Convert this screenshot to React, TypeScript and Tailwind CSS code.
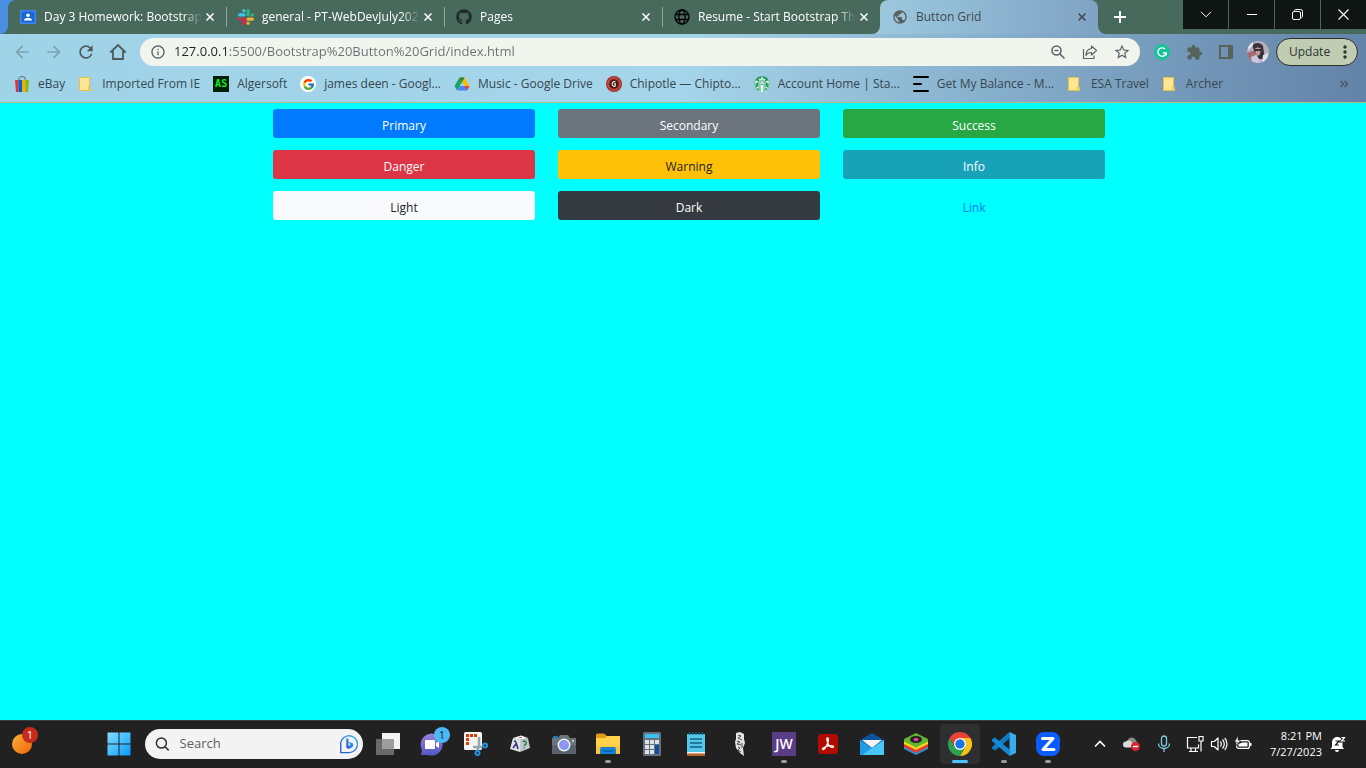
import type { ReactNode } from "react";
import clsx from "clsx";
import { FaGithub } from "react-icons/fa";
import { FcGoogle } from "react-icons/fc";
import { SiStarbucks } from "react-icons/si";
import {
  MdArrowBack,
  MdArrowForward,
  MdExtension,
  MdInfoOutline,
  MdMoreVert,
  MdPublic,
  MdRefresh,
  MdStarBorder,
} from "react-icons/md";

/* ---------- favicons ---------- */

function ClassroomIcon() {
  return (
    <svg width="16" height="16" viewBox="0 0 16 16">
      <rect y="1" width="16" height="14" rx="1.500" fill="#4285f4" />
      <rect x="1.500" y="2.500" width="13" height="11" fill="#1967d2" />
      <circle cx="8" cy="6.300" r="1.800" fill="#fff" />
      <path d="M4 11.500c0-2 2-2.800 4-2.800s4 .8 4 2.800z" fill="#fff" />
    </svg>
  );
}

function SlackIcon() {
  return (
    <svg width="16" height="16" viewBox="0 0 24 24">
      <path d="M5 15.200a2.500 2.500 0 1 1-2.500-2.500H5zm1.300 0a2.500 2.500 0 0 1 5 0v6.300a2.500 2.500 0 0 1-5 0z" fill="#e01e5a" />
      <path d="M8.800 5a2.500 2.500 0 1 1 2.500-2.500V5zm0 1.300a2.500 2.500 0 0 1 0 5H2.500a2.500 2.500 0 0 1 0-5z" fill="#36c5f0" />
      <path d="M19 8.800a2.500 2.500 0 1 1 2.500 2.500H19zm-1.300 0a2.500 2.500 0 0 1-5 0V2.500a2.500 2.500 0 0 1 5 0z" fill="#2eb67d" />
      <path d="M15.200 19a2.500 2.500 0 1 1-2.500 2.500V19zm0-1.300a2.500 2.500 0 0 1 0-5h6.300a2.500 2.500 0 0 1 0 5z" fill="#ecb22e" />
    </svg>
  );
}

function WireGlobeIcon() {
  return (
    <svg width="16" height="16" viewBox="0 0 16 16" fill="none" stroke="#000" strokeWidth="1.300">
      <circle cx="8" cy="8" r="7" />
      <ellipse cx="8" cy="8" rx="3.200" ry="7" />
      <path d="M2 5.500h12M2 10.500h12" />
    </svg>
  );
}

function EbayIcon() {
  return (
    <svg width="16" height="16" viewBox="0 0 16 16">
      <path d="M4.800 5V3.500a3.200 3 0 0 1 6.400 0V5" fill="none" stroke="#777" strokeWidth="1.200" />
      <path d="M1 4h3.500v12H2z" fill="#e53238" />
      <path d="M4.500 4H8v12H4.500z" fill="#0064d2" />
      <path d="M8 4h3.500v12H8z" fill="#f5af02" />
      <path d="M11.500 4H15l-1 12h-2.500z" fill="#86b817" />
    </svg>
  );
}

function FolderIcon() {
  return (
    <svg width="16" height="16" viewBox="0 0 16 16">
      <path d="M1.500 1.500h10v9.500h1v3.500h-11z" fill="#ffe694" stroke="#e8bf45" />
      <path d="M10.500 14v-3h1.500" fill="none" stroke="#e8bf45" />
    </svg>
  );
}

function AlgersoftIcon() {
  return (
    <span className="grid size-4 place-items-center bg-[#041f08] font-['DejaVu_Sans_Mono',monospace] text-[10px] leading-4 font-bold text-[#13ea24]">
      AS
    </span>
  );
}

function GoogleIcon() {
  return (
    <span className="grid size-4 place-items-center rounded-full bg-white">
      <FcGoogle size={13} />
    </span>
  );
}

function DriveIcon() {
  return (
    <svg width="16" height="16" viewBox="0 0 16 16">
      <path d="M5.500 1.500 8 6 3 14.500.5 10z" fill="#1ea362" />
      <path d="M5.500 1.500h5L15.500 10h-5z" fill="#ffba00" />
      <path d="M5.500 10h10L13 14.500H3z" fill="#4688f4" />
      <path d="M10.500 10h5L13 14.500z" fill="#ea4335" />
      <path d="M5.500 1.500h5L8 6z" fill="#188038" />
    </svg>
  );
}

function ChipotleIcon() {
  return (
    <svg width="16" height="16" viewBox="0 0 16 16">
      <circle cx="8" cy="8" r="8" fill="#a9312a" />
      <circle cx="8" cy="8" r="6" fill="none" stroke="#d98d84" strokeDasharray="1 1" />
      <circle cx="8" cy="8" r="4.500" fill="#451a12" />
      <path d="M9.500 5.800c-2-.6-3.500.5-3.300 2.500s2 2.500 3.300 1.500M8 7.500l1.500.5-.5 2" fill="none" stroke="#f2e4dc" strokeWidth="1.200" />
    </svg>
  );
}

function StarbucksIcon() {
  return (
    <span className="grid size-4 place-items-center rounded-full bg-white">
      <SiStarbucks size={16} color="#1d9b62" />
    </span>
  );
}

function BalanceIcon() {
  return (
    <svg width="16" height="16" viewBox="0 0 16 16">
      <path d="M1 1h14M1 8h7M1 15h14" stroke="#000" strokeWidth="2" strokeLinecap="round" />
    </svg>
  );
}

/* ---------- toolbar icons ---------- */

function CrossIcon() {
  return (
    <svg width="8" height="8" viewBox="0 0 8 8">
      <path d="M.5.5l7 7M7.500.5l-7 7" stroke="currentColor" strokeWidth="1.500" />
    </svg>
  );
}

function HomeIcon() {
  return (
    <svg width="18" height="18" viewBox="0 0 18 18" fill="none" stroke="currentColor" strokeWidth="1.800">
      <path d="M1.300 9.500 9 2l7.700 7.500M4 8v8h10V8" />
    </svg>
  );
}

function ZoomOutIcon() {
  return (
    <svg width="16" height="16" viewBox="0 0 16 16" fill="none" stroke="currentColor" strokeWidth="1.600">
      <circle cx="6.500" cy="6.500" r="4.500" />
      <path d="M10 10l4.500 4.500M4.500 6.500h4" />
    </svg>
  );
}

function ShareIcon() {
  return (
    <svg width="16" height="16" viewBox="0 0 16 16" fill="none" stroke="currentColor" strokeWidth="1.200">
      <path d="M1.500 5v9.500h10.500V11.500" />
      <path d="M9.500 2l5 4.500-5 4.500V8.500C7 8.500 5 9.500 4 11.500c0-4 2-6.500 5.500-7z" strokeLinejoin="round" />
    </svg>
  );
}

function PanelIcon() {
  return (
    <svg width="14" height="14" viewBox="0 0 14 14">
      <path d="M1 1h12v12H1z" fill="none" stroke="#56635a" strokeWidth="2" />
      <path d="M9 1h4v12H9z" fill="#56635a" />
    </svg>
  );
}

function GrammarlyIcon() {
  return (
    <svg width="16" height="16" viewBox="0 0 16 16">
      <circle cx="8" cy="8" r="8" fill="#15c39a" />
      <path d="M11 5a4.200 4.200 0 1 0 1.200 4H9M12.200 9v2.500" fill="none" stroke="#fff" strokeWidth="1.400" />
    </svg>
  );
}

function AvatarIcon() {
  return (
    <svg width="22" height="22" viewBox="0 0 22 22" className="rounded-full">
      <rect width="22" height="22" fill="#b9aebb" />
      <path d="M0 12l8-3 2 13H0z" fill="#a56a72" />
      <path d="M5 5c2-4 9-4 11 0l1 7 2 6h-7l-4-7z" fill="#38323d" />
      <path d="M8 8c1-2 5-2 6 0l-1 5c-1 2-3 2-4 0z" fill="#c19a93" />
      <path d="M7.500 8h7v2h-7z" fill="#37333d" />
      <path d="M16 14l5-2v7l-6 3z" fill="#dbe0ee" />
      <path d="M1 3l5-2v4l-5 4z" fill="#e2dfe6" />
      <path d="M4 16l5-2 5 8H5z" fill="#c9c8dc" />
    </svg>
  );
}

/* ---------- taskbar icons ---------- */

function StartIcon() {
  return (
    <svg width="24" height="24" viewBox="0 0 24 24">
      <defs>
        <linearGradient id="start" x1="0" y1="0" x2="24" y2="24" gradientUnits="userSpaceOnUse">
          <stop stopColor="#85dcff" />
          <stop offset=".5" stopColor="#45beff" />
          <stop offset="1" stopColor="#0793fb" />
        </linearGradient>
      </defs>
      <path d="M.5.5h11v11H.5zM12.500.5h11v11h-11zM.5 12.500h11v11H.5zM12.500 12.500h11v11h-11z" fill="url(#start)" />
    </svg>
  );
}

function WeatherIcon() {
  return (
    <svg width="28" height="28" viewBox="0 0 28 28">
      <defs>
        <linearGradient id="sun" x1="0" y1="0" x2="1" y2="1">
          <stop stopColor="#f9b233" />
          <stop offset="1" stopColor="#f0640c" />
        </linearGradient>
      </defs>
      <circle cx="14" cy="14" r="10" fill="url(#sun)" />
    </svg>
  );
}

function BingIcon() {
  return (
    <svg width="22" height="22" viewBox="0 0 22 22" fill="none">
      <defs>
        <linearGradient id="bing" x1="0" y1="1" x2="1" y2="0">
          <stop stopColor="#2157c8" />
          <stop offset=".5" stopColor="#2b7fe0" />
          <stop offset="1" stopColor="#36c6ee" />
        </linearGradient>
      </defs>
      <path d="M2 20.500v-7A9.300 9.300 0 1 1 11.500 20.500z" stroke="url(#bing)" strokeWidth="1.500" />
      <path d="M8 4.500l2.500 1v8l2-1.500-1.500-3.500 4.500 2c.8 2 0 3.200-1.200 4L10.500 16.500 8 15z" fill="url(#bing)" />
    </svg>
  );
}

function TaskViewIcon() {
  return (
    <svg width="24" height="24" viewBox="0 0 24 24">
      <path d="M6 1h18v16H6z" fill="#f2f2f2" />
      <path d="M0 7h18v16H0z" fill="#6a6a6a" />
      <path d="M6 7h12v10H6z" fill="#9d9d9d" />
    </svg>
  );
}

function ChatIcon() {
  return (
    <svg width="24" height="24" viewBox="0 0 24 24">
      <defs>
        <linearGradient id="chat" x1="0" y1="0" x2="0" y2="1">
          <stop stopColor="#9b7fd6" />
          <stop offset="1" stopColor="#5357c7" />
        </linearGradient>
      </defs>
      <path d="M1 23l1-5A11 11 0 1 1 8 23z" fill="url(#chat)" />
      <rect x="5" y="8" width="10" height="9" rx="1" fill="#fff" />
      <path d="M16 11l3-2v7l-3-2z" fill="#fff" />
    </svg>
  );
}

function SnipIcon() {
  return (
    <svg width="24" height="24" viewBox="0 0 24 24">
      <rect width="18" height="18" rx="1.500" fill="#f5f5f5" />
      <path d="M2 2h3v3H2zM6 2h3v3H6zM10 2h3v3h-3zM2 6h3v3H2zM2 10h3v3H2z" fill="#d83b01" />
      <path d="M15 5v10l-2 4M9 15h9" fill="none" stroke="#9aa4ad" strokeWidth="2.500" />
      <circle cx="21" cy="13.500" r="3" fill="#2196e0" />
      <circle cx="13.500" cy="21" r="3" fill="#2196e0" />
      <circle cx="21" cy="13.500" r="1" fill="#202020" />
      <circle cx="13.500" cy="21" r="1" fill="#202020" />
    </svg>
  );
}

function DiceIcon() {
  return (
    <svg width="22" height="18" viewBox="0 0 22 18">
      <path d="M4 3l8-2.500L19 3l-8 2z" fill="#fafafa" />
      <path d="M4 3l7 2v12L1 14z" fill="#dfe4ea" />
      <path d="M11 5l8-2 2 10-10 4z" fill="#bfc7d0" />
      <path d="M10 2.500h3" stroke="#c9534f" />
      <path d="M5 6c2 0 2 1 4 8M7 9l-3 4" fill="none" stroke="#2a2b78" strokeWidth="1.500" />
      <path d="M14 7c2-2 4 0 3 2l-2 2M15 12.500v1" fill="none" stroke="#2d7a3d" strokeWidth="1.500" />
    </svg>
  );
}

function CameraIcon() {
  return (
    <svg width="24" height="24" viewBox="0 0 24 24">
      <defs>
        <linearGradient id="lens" x1="0" y1="0" x2="1" y2="1">
          <stop stopColor="#4aa8f0" />
          <stop offset=".5" stopColor="#a98cf0" />
          <stop offset="1" stopColor="#27b4f5" />
        </linearGradient>
      </defs>
      <rect x="1" y="4" width="5" height="3" rx="1" fill="#1683c9" />
      <path d="M0 6h6l2-3h8l2 3h6v16H0z" fill="#6c747c" />
      <path d="M0 13h24v9H0z" fill="#59616a" />
      <circle cx="12" cy="13" r="6.500" fill="#f0f2f5" />
      <circle cx="12" cy="13" r="5" fill="url(#lens)" />
      <circle cx="21" cy="9" r="1" fill="#d8dde2" />
    </svg>
  );
}

function ExplorerIcon() {
  return (
    <svg width="26" height="24" viewBox="0 0 26 24">
      <path d="M1 3a1.500 1.500 0 0 1 1.500-1.500H9L12 4v4H1z" fill="#e09b10" />
      <path d="M1 6h9l2-2h13v18H1z" fill="#ffd24a" />
      <path d="M1 14h24v8H1z" fill="#fcc535" />
      <path d="M5 22v-5a2 2 0 0 1 2-2h12a2 2 0 0 1 2 2v5z" fill="#1583d8" />
      <path d="M8 19h10" stroke="#0b5fa8" strokeWidth="1.500" />
    </svg>
  );
}

function CalculatorIcon() {
  return (
    <svg width="18" height="24" viewBox="0 0 18 24">
      <rect width="18" height="24" rx="1.500" fill="#67717c" />
      <path d="M2 2h14v4H2z" fill="#35c1f1" />
      <path d="M2 8h4v4H2zM7 8h4v4H7zM12 8h4v4h-4zM2 13h4v4H2zM7 13h4v4H7zM2 18h4v4H2zM7 18h4v4H7z" fill="#dde2e8" />
      <path d="M12 13h4v9h-4z" fill="#124f96" />
    </svg>
  );
}

function NotepadIcon() {
  return (
    <svg width="18" height="24" viewBox="0 0 18 24">
      <path d="M0 21h18v3H0z" fill="#b5612a" />
      <path d="M0 20h18v1.500H0z" fill="#f2f2f2" />
      <path d="M0 2h18v18H0z" fill="#55c5e8" />
      <path d="M2.500 0v3M5.500 0v3M9 0v3M12.500 0v3M15.500 0v3" stroke="#176a8f" strokeWidth="1.300" />
      <path d="M3 7h12M3 11h12M3 15h12" stroke="#116088" strokeWidth="1.500" />
    </svg>
  );
}

function FeatherIcon() {
  return (
    <svg width="12" height="24" viewBox="0 0 12 24">
      <path d="M2 1l4-1 4 2v5l1 4-2 5 1 8-4-3-4-5-1-6 1-3z" fill="#e4e4e4" />
      <path d="M4 3l3 1-3 2 4 2M3 9l3 1-3 2 4 1M4 15l2 1-2 2 3 2M8 11v5" fill="none" stroke="#3a3a3a" strokeWidth=".9" />
    </svg>
  );
}

function AcrobatIcon() {
  return (
    <svg width="22" height="22" viewBox="0 0 22 22">
      <rect x="1" y="1" width="20" height="20" rx="3.500" fill="#b30b00" />
      <path
        d="M10.500 5c1.500 0 1 3 0 5.500-1.200 3-3.200 6-4.500 6s-.5-2 3-3 7.500-1.200 7.500.2-3 .8-4.500-1.200S9 5 10.500 5z"
        fill="none"
        stroke="#fff"
        strokeWidth="1.300"
      />
    </svg>
  );
}

function MailIcon() {
  return (
    <svg width="24" height="22" viewBox="0 0 24 22">
      <path d="M0 7l12-7 12 7v5H0z" fill="#0b549c" />
      <path d="M2 7h20l-10 8z" fill="#f5f5f5" />
      <path d="M0 7l12 8 12-8v15H0z" fill="#1e9de7" />
      <path d="M24 7v15H2z" fill="#46c7f4" />
    </svg>
  );
}

function BlueStacksIcon() {
  return (
    <svg width="24" height="22" viewBox="0 0 24 22">
      <path d="M0 14l12-6 12 6v2l-12 6-12-6z" fill="#2592dc" />
      <path d="M0 11l12-6 12 6v3l-12 6-12-6z" fill="#e53a2e" />
      <path d="M0 8.500l12-6 12 6V11l-12 6-12-6z" fill="#fbd21c" />
      <path d="M0 6l12-6 12 6v2.500l-12 6-12-6z" fill="#62b52d" />
      <ellipse cx="12" cy="6.500" rx="6" ry="3.500" fill="#202326" />
      <ellipse cx="12" cy="6.500" rx="2.500" ry="1.700" fill="#e63ea0" />
    </svg>
  );
}

function ChromeIcon() {
  return (
    <svg width="24" height="24" viewBox="0 0 48 48">
      <path d="M24 12h20.800A24 24 0 0 0 3.200 12l10.400 18z" fill="#ea4335" />
      <path d="M34.400 30L24 48A24 24 0 0 0 44.800 12H24z" fill="#fbc116" />
      <path d="M13.600 30L3.200 12A24 24 0 0 0 24 48l10.400-18z" fill="#2da14e" />
      <circle cx="24" cy="24" r="12" fill="#fff" />
      <circle cx="24" cy="24" r="9.500" fill="#1a73e8" />
    </svg>
  );
}

function CodeIcon() {
  return (
    <svg width="24" height="24" viewBox="0 0 24 24">
      <path d="M17.500 0v6.500L3 18.500 0 16.500v-1.500z" fill="#0f7cc4" />
      <path d="M17.500 24v-6.500L3 5.500 0 7.500V9z" fill="#1389d3" />
      <path d="M17.500 0L24 3v18l-6.500 3z" fill="#3aaaf0" />
    </svg>
  );
}

function ZoomAppIcon() {
  return (
    <svg width="24" height="24" viewBox="0 0 24 24">
      <rect width="24" height="24" rx="8" fill="#0b5cff" />
      <path d="M6.500 6.500h10.500L7 17.500h11" fill="none" stroke="#fff" strokeWidth="3" strokeLinejoin="round" strokeLinecap="round" />
    </svg>
  );
}

/* ---------- tray icons ---------- */

function CloudIcon() {
  return (
    <svg width="18" height="16" viewBox="0 0 18 16">
      <path d="M5 3.500a4.500 4.500 0 0 1 8 1l2 3-6 2-6-3z" fill="#8a8a8a" />
      <path d="M3 11.500a3 3 0 0 1 0-6 4 4 0 0 1 6 1l3 5z" fill="#dcdcdc" />
      <circle cx="12.500" cy="10.500" r="4.500" fill="#d9232e" />
      <path d="M10 10.500h5" stroke="#fff" strokeWidth="1.400" />
    </svg>
  );
}

function MicIcon() {
  return (
    <svg width="14" height="18" viewBox="0 0 14 18" fill="none" stroke="#7fcbe6" strokeWidth="1.300">
      <rect x="4.500" y="1" width="5" height="10" rx="2.500" />
      <path d="M1.500 8.500c0 3 2.500 5 5.500 5s5.500-2 5.500-5M7 13.500V17" />
    </svg>
  );
}

function NetworkIcon() {
  return (
    <svg width="18" height="18" viewBox="0 0 18 18" fill="none" stroke="#fff" strokeWidth="1.200">
      <path d="M11 2.500H1.500v10.500h11V9.500M5 13v3M9.500 13v3M3 16.500h9" />
      <path d="M13 1.500h4V6h-4zM15 6v10.500" />
    </svg>
  );
}

function SpeakerIcon() {
  return (
    <svg width="18" height="16" viewBox="0 0 18 16" fill="none" stroke="#fff" strokeWidth="1.200">
      <path d="M1.500 5.500h2.800L8 2v12l-3.700-3.500H1.500z" strokeLinejoin="round" />
      <path d="M10.300 5.500a3.500 3.500 0 0 1 0 5M12.500 3.500a6.500 6.500 0 0 1 0 9M14.700 2a9 9 0 0 1 0 12" />
    </svg>
  );
}

function BatteryIcon() {
  return (
    <svg width="18" height="16" viewBox="0 0 18 16">
      <rect x="2.600" y="4.600" width="12.800" height="7.800" rx="2" fill="none" stroke="#fff" strokeWidth="1.200" />
      <path d="M4.500 8l4-1.500h5v4h-9zM16 7h1.500v3H16z" fill="#fff" />
      <path d="M4 0L.5 6h3L2 10l4.500-5.500H4z" fill="#fff" stroke="#202020" strokeWidth=".5" />
    </svg>
  );
}

function BellIcon() {
  return (
    <svg width="16" height="16" viewBox="0 0 16 16">
      <path d="M2 11V6.500C2 3.500 4 1 7 1c4 0 5.500 2.500 5.500 5.500V11l1.500 2H.5zM5 14h4a2 2 0 0 1-4 0z" fill="#fff" />
      <path d="M5.500 5h3.500L5.500 9H9" fill="none" stroke="#202020" strokeWidth="1.200" />
      <path d="M11 1.500h4l-3.500 3.500H15" fill="none" stroke="#202020" strokeWidth="3" />
      <path d="M11.500 1.500h3l-3 3.500h3.500" fill="none" stroke="#fff" strokeWidth="1.200" />
    </svg>
  );
}

/* ---------- data ---------- */

const tabs: { title: string; icon: ReactNode }[] = [
  { title: "Day 3 Homework: Bootstrap", icon: <ClassroomIcon /> },
  { title: "general - PT-WebDevJuly202", icon: <SlackIcon /> },
  { title: "Pages", icon: <FaGithub size={16} color="#24292f" /> },
  { title: "Resume - Start Bootstrap The", icon: <WireGlobeIcon /> },
];

const bookmarks: { title: string; icon: ReactNode }[] = [
  { title: "eBay", icon: <EbayIcon /> },
  { title: "Imported From IE", icon: <FolderIcon /> },
  { title: "Algersoft", icon: <AlgersoftIcon /> },
  { title: "james deen - Googl...", icon: <GoogleIcon /> },
  { title: "Music - Google Drive", icon: <DriveIcon /> },
  { title: "Chipotle — Chipto...", icon: <ChipotleIcon /> },
  { title: "Account Home | Sta...", icon: <StarbucksIcon /> },
  { title: "Get My Balance - M...", icon: <BalanceIcon /> },
  { title: "ESA Travel", icon: <FolderIcon /> },
  { title: "Archer", icon: <FolderIcon /> },
];

const gridButtons = [
  { label: "Primary", style: "bg-[#007bff] text-white" },
  { label: "Secondary", style: "bg-[#6c757d] text-white" },
  { label: "Success", style: "bg-[#28a745] text-white" },
  { label: "Danger", style: "bg-[#dc3545] text-white" },
  { label: "Warning", style: "bg-[#ffc107] text-[#212529]" },
  { label: "Info", style: "bg-[#17a2b8] text-white" },
  { label: "Light", style: "bg-[#f8f9fa] text-[#212529]" },
  { label: "Dark", style: "bg-[#343a40] text-white" },
  { label: "Link", style: "text-[#007bff]" },
];

const apps: { name: string; icon: ReactNode; badge?: string; running?: boolean; active?: boolean }[] = [
  { name: "Task view", icon: <TaskViewIcon /> },
  { name: "Chat", icon: <ChatIcon />, badge: "1" },
  { name: "Snipping Tool", icon: <SnipIcon /> },
  { name: "Dice", icon: <DiceIcon /> },
  { name: "Camera", icon: <CameraIcon /> },
  { name: "File Explorer", icon: <ExplorerIcon />, running: true },
  { name: "Calculator", icon: <CalculatorIcon /> },
  { name: "Notepad", icon: <NotepadIcon /> },
  { name: "Feather", icon: <FeatherIcon /> },
  {
    name: "JW Library",
    icon: <span className="grid size-6 place-items-center bg-[#5b3c88] text-sm font-semibold text-white">JW</span>,
    running: true,
  },
  { name: "Acrobat", icon: <AcrobatIcon /> },
  { name: "Mail", icon: <MailIcon /> },
  { name: "BlueStacks", icon: <BlueStacksIcon /> },
  { name: "Chrome", icon: <ChromeIcon />, active: true },
  { name: "Visual Studio Code", icon: <CodeIcon />, running: true },
  { name: "Zoom", icon: <ZoomAppIcon />, running: true },
];

/* ---------- browser chrome ---------- */

function Tab({ title, icon, divider }: { title: string; icon: ReactNode; divider: boolean }) {
  return (
    <div className="relative flex w-[218px] items-center pl-3 text-white">
      {divider && <span className="absolute left-0 h-5 w-px bg-[#93a79e]" />}
      <span className="mr-2 shrink-0">{icon}</span>
      <span className="w-[158px] overflow-hidden mask-r-from-88% mask-r-to-100% text-xs whitespace-nowrap">{title}</span>
      <button aria-label={`Close ${title}`} className="grid size-4 shrink-0 place-items-center">
        <CrossIcon />
      </button>
    </div>
  );
}

function TabStrip() {
  return (
    <div className="flex h-[34px] bg-[#4a90e2] pl-2">
      <div className="relative flex grow rounded-tl-lg bg-[#486a5c]">
        <svg className="absolute bottom-0 -left-2" width="8" height="8" viewBox="0 0 8 8">
          <path d="M8 0v8H0a8 8 0 0 0 8-8z" fill="#486a5c" />
        </svg>
        {tabs.map((tab, i) => (
          <Tab key={tab.title} {...tab} divider={i > 0} />
        ))}
        <div className="relative flex w-[218px] items-center rounded-t-lg bg-linear-to-r from-[#9cc8de] to-[#7fa3c4] pl-3 text-[#3f4a4d]">
          <svg className="absolute bottom-0 -left-2" width="8" height="8" viewBox="0 0 8 8">
            <path d="M8 0v8H0a8 8 0 0 0 8-8z" fill="#9cc8de" />
          </svg>
          <svg className="absolute -right-2 bottom-0" width="8" height="8" viewBox="0 0 8 8">
            <path d="M0 0v8h8a8 8 0 0 1-8-8z" fill="#7fa3c4" />
          </svg>
          <MdPublic size={16} color="#56605f" className="mr-2" />
          <span className="w-[158px] text-xs">Button Grid</span>
          <button aria-label="Close Button Grid" className="grid size-4 place-items-center">
            <CrossIcon />
          </button>
        </div>
        <button aria-label="New tab" className="ml-2 grid w-7 place-items-center">
          <svg width="12" height="12" viewBox="0 0 12 12">
            <path d="M6 0v12M0 6h12" stroke="#fff" strokeWidth="2" />
          </svg>
        </button>
        <div className="ml-auto flex h-[29px] gap-px text-white">
          <button aria-label="Search tabs" className="grid w-[45px] place-items-center bg-[#0e1512]">
            <svg width="12" height="7" viewBox="0 0 12 7">
              <path d="M1 .8l5 5 5-5" fill="none" stroke="#fff" />
            </svg>
          </button>
          <button aria-label="Minimize" className="grid w-[45px] place-items-center bg-[#0e1512]">
            <span className="h-px w-2.5 bg-white" />
          </button>
          <button aria-label="Restore" className="grid w-[45px] place-items-center bg-[#0e1512]">
            <svg width="11" height="11" viewBox="0 0 11 11" fill="none" stroke="#fff">
              <rect x=".5" y="2.500" width="8" height="8" rx="1.500" />
              <path d="M2.500 2.500v-1a1 1 0 0 1 1-1h5a2 2 0 0 1 2 2v5a1 1 0 0 1-1 1h-1" />
            </svg>
          </button>
          <button aria-label="Close window" className="grid w-[45px] place-items-center bg-[#0e1512]">
            <svg width="11" height="11" viewBox="0 0 11 11">
              <path d="M.5.5l10 10M10.500.5l-10 10" stroke="#fff" strokeWidth="1.100" />
            </svg>
          </button>
        </div>
      </div>
    </div>
  );
}

function Toolbar() {
  return (
    <div className="flex items-center pt-1 pr-2 pl-1.5 text-[#4c5a58]">
      <button aria-label="Back" className="grid w-8 place-items-center text-[#7ea4b0]">
        <MdArrowBack size={20} />
      </button>
      <button aria-label="Forward" className="grid w-8 place-items-center text-[#7ea4b0]">
        <MdArrowForward size={20} />
      </button>
      <button aria-label="Reload" className="grid w-8 place-items-center">
        <MdRefresh size={20} />
      </button>
      <button aria-label="Home" className="grid w-8 place-items-center">
        <HomeIcon />
      </button>
      <div className="ml-1.5 flex h-7 grow items-center gap-2 rounded-full bg-[#f2f5ee] pr-0.5 pl-2.5 text-[#5f6368]">
        <MdInfoOutline size={16} />
        {/* host is dark, the path after it is grey */}
        <input
          aria-label="Address"
          defaultValue="127.0.0.1:5500/Bootstrap%20Button%20Grid/index.html"
          className="min-w-0 grow bg-linear-to-r from-[#202124] from-[53px] to-[#6b6f72] to-[53px] bg-clip-text text-[13px] text-transparent outline-none"
        />
        <div className="flex">
          <button aria-label="Zoom" className="grid w-8 place-items-center">
            <ZoomOutIcon />
          </button>
          <button aria-label="Share" className="grid w-8 place-items-center">
            <ShareIcon />
          </button>
          <button aria-label="Bookmark this page" className="grid w-8 place-items-center">
            <MdStarBorder size={18} />
          </button>
        </div>
      </div>
      <div className="ml-1.5 flex items-center">
        <button aria-label="Grammarly" className="grid w-8 place-items-center">
          <GrammarlyIcon />
        </button>
        <button aria-label="Extensions" className="grid w-8 place-items-center">
          <MdExtension size={17} color="#56635a" />
        </button>
        <button aria-label="Side panel" className="grid w-8 place-items-center">
          <PanelIcon />
        </button>
        <button aria-label="Profile" className="grid w-8 place-items-center">
          <AvatarIcon />
        </button>
      </div>
      <button className="ml-0.5 flex h-7 w-[82px] items-center justify-between rounded-full border border-[#2a2f2b] bg-[#c0cdb2] pl-3 text-xs text-[#2b3430]">
        Update
        <MdMoreVert size={20} className="mr-0.5" />
      </button>
    </div>
  );
}

function BookmarksBar() {
  return (
    <nav className="flex h-9 items-center gap-[13px] pr-4 pl-3.5 text-xs text-[#36474f]">
      {bookmarks.map(({ title, icon }) => (
        <a key={title} href="#" className="flex items-center gap-2 whitespace-nowrap">
          {icon}
          {title}
        </a>
      ))}
      <button aria-label="More bookmarks" className="ml-auto">
        <svg width="12" height="8" viewBox="0 0 12 8">
          <path d="M2.500 1l3 3-3 3M6.500 1l3 3-3 3" fill="none" stroke="#435462" strokeWidth="1.300" />
        </svg>
      </button>
    </nav>
  );
}

/* ---------- taskbar ---------- */

function Taskbar() {
  return (
    <footer className="flex h-12 items-center bg-[#212121] text-white shadow-[inset_0_1px_#3d3d3d]">
      <button aria-label="Widgets" className="relative ml-0.5 grid size-10 place-items-center">
        <WeatherIcon />
        <span className="absolute top-[3px] right-1 grid size-4 place-items-center rounded-full bg-[#c42b1c] text-[11px] leading-4">
          1
        </span>
      </button>
      <button aria-label="Start" className="ml-[57px] grid size-10 place-items-center">
        <StartIcon />
      </button>
      <label className="ml-1.5 flex h-[30px] w-[218px] items-center gap-2.5 rounded-full bg-[#f3f3f3] pr-1 pl-2.5 text-[#333]">
        <svg width="16" height="16" viewBox="0 0 16 16" fill="none" stroke="#2b2b2b" strokeWidth="1.600">
          <circle cx="7" cy="7" r="5.500" />
          <path d="M11 11l4 4" />
        </svg>
        <input
          aria-label="Search"
          placeholder="Search"
          className="min-w-0 grow bg-transparent text-[13px] outline-none placeholder:text-[#5f5f5f]"
        />
        <BingIcon />
      </label>
      <div className="ml-[5px] flex gap-1">
        {apps.map(({ name, icon, badge, running, active }) => (
          <button
            key={name}
            aria-label={name}
            className={clsx("relative grid size-10 place-items-center rounded", active && "bg-[#2f2f31]")}
          >
            {icon}
            {badge && (
              <span className="absolute top-[3px] right-0.5 grid size-4 place-items-center rounded-full bg-[#4cb8f5] text-[11px] leading-4 text-[#1b1b1b]">
                {badge}
              </span>
            )}
            {running && <span className="absolute bottom-px h-[3px] w-1.5 rounded-full bg-[#9a9a9a]" />}
            {active && <span className="absolute bottom-px h-[3px] w-4 rounded-full bg-[#4cc2ff]" />}
          </button>
        ))}
      </div>
      <div className="ml-auto flex items-center pr-5">
        <button aria-label="Hidden icons" className="grid w-8 place-items-center">
          <svg width="12" height="8" viewBox="0 0 12 8">
            <path d="M1 6.500l5-5 5 5" fill="none" stroke="#fff" strokeWidth="1.600" />
          </svg>
        </button>
        <button aria-label="OneDrive" className="grid w-8 place-items-center">
          <CloudIcon />
        </button>
        <button aria-label="Microphone" className="grid w-8 place-items-center">
          <MicIcon />
        </button>
        <button aria-label="Network, sound and battery" className="ml-1.5 flex items-center gap-1.5">
          <NetworkIcon />
          <SpeakerIcon />
          <BatteryIcon />
        </button>
        <div className="ml-3.5 w-14 text-right text-[11px] leading-4">
          <div>8:21 PM</div>
          <div>7/27/2023</div>
        </div>
        <button aria-label="Notifications" className="ml-2">
          <BellIcon />
        </button>
      </div>
    </footer>
  );
}

export default function App() {
  return (
    <div className="flex min-h-screen flex-col overflow-hidden bg-[#00ffff] font-['Open_Sans',sans-serif]">
      <header className="border-b border-[#b3b99c] bg-linear-to-r from-[#9fd3e8] via-[#a5d5ea] via-50% to-[#6383a8]">
        <TabStrip />
        <Toolbar />
        <BookmarksBar />
      </header>
      <main className="grow">
        <div className="mx-auto grid max-w-[844px] grid-cols-3 gap-x-[23px] gap-y-3 pt-1.5 pl-3">
          {gridButtons.map(({ label, style }) => (
            <button key={label} className={clsx("h-[29px] rounded-[3px] pt-1 text-xs", style)}>
              {label}
            </button>
          ))}
        </div>
      </main>
      <Taskbar />
    </div>
  );
}
